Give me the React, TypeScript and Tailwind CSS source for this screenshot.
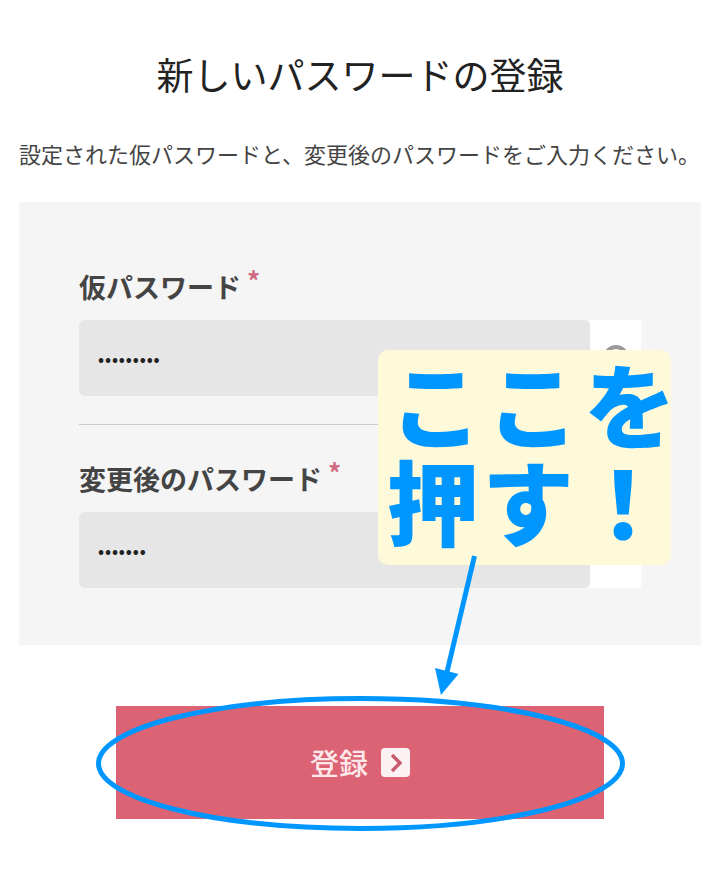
const FONT = "font-['Noto_Sans_CJK_JP','Noto_Sans',sans-serif]";

const EyeIcon = () => (
  <div className="flex w-[51px] items-center justify-center self-stretch bg-white">
    <div className="h-[26px] w-[26px] rounded-full border-[4px] border-[#9b9b9b]" />
  </div>
);

type FieldProps = {
  label: string;
  dots: string;
};

const Field = ({ label, dots }: FieldProps) => {
  return (
    <div>
      <div className="flex h-[40px] items-center text-[27px] leading-[40px] font-bold text-[#444444]">
        {label}
        <span className="mb-[14px] ml-[6px] text-[26px] leading-[24px] font-bold text-[#cf6a80]">*</span>
      </div>
      <div className="mt-[13px] flex h-[76px] items-stretch">
        <div className="flex flex-1 items-center rounded-[6px] bg-[#e6e6e6] pl-[19px] text-[16px] font-bold text-[#222222]">
          <span className="tracking-[0.9px]">{dots}</span>
        </div>
        <EyeIcon />
      </div>
    </div>
  );
};

const App = () => {
  return (
    <div className={`relative h-[873px] w-[720px] overflow-hidden bg-white ${FONT}`}>
      {/* heading */}
      <h1 className="pt-[48px] text-center text-[37px] leading-[52px] font-normal text-[#222222]">
        新しいパスワードの登録
      </h1>
      <p className="mt-[35px] pl-[19px] text-[22px] leading-[36px] whitespace-nowrap text-[#444444]">
        設定された仮パスワードと、変更後のパスワードをご入力ください。
      </p>

      {/* form panel */}
      <div className="mt-[31px] ml-[19px] h-[443px] w-[682px] bg-[#f5f5f5] px-[60px] pt-[65px]">
        <Field label="仮パスワード" dots="•••••••••" />
        <div className="mt-[28px] mb-[34px] h-px bg-[#cccccc]" />
        <Field label="変更後のパスワード" dots="•••••••" />
      </div>

      {/* submit */}
      <div className="mt-[61px] flex justify-center">
        <div className="flex h-[113px] w-[488px] items-center justify-center gap-[13px] bg-[#dc6374]">
          <span className="text-[29px] leading-none font-medium text-[#fde8ea]">登録</span>
          <div className="flex h-[29px] w-[29px] items-center justify-center rounded-[4px] bg-[#fdf2f3]">
            <svg width="16" height="20" viewBox="0 0 16 20" fill="none">
              <path d="M4 2l8 8-8 8" stroke="#c9596c" strokeWidth="3.4" />
            </svg>
          </div>
        </div>
      </div>

      {/* annotation note */}
      <div className="absolute top-[350px] left-[378px] h-[215px] w-[293px] rounded-[10px] bg-[#fef9d8] text-[#0096ff]">
        <div className="pt-[5px] pl-[12px] text-[92px] leading-[93px] font-black tracking-[5px] whitespace-nowrap">
          <div>ここを</div>
          <div className="pt-[4px] -ml-[3px] tracking-[3px]">押す！</div>
        </div>
      </div>

      {/* annotation arrow and ellipse */}
      <svg className="absolute top-0 left-0" width="720" height="873" viewBox="0 0 720 873" fill="none">
        <ellipse cx="360.5" cy="763.5" rx="262" ry="65" stroke="#0096ff" strokeWidth="5" />
        <path d="M474.5 556L447 672" stroke="#0096ff" strokeWidth="5" />
        <path d="M435 668L458.5 674L441 695Z" fill="#0096ff" />
      </svg>
    </div>
  );
};

export default App;
